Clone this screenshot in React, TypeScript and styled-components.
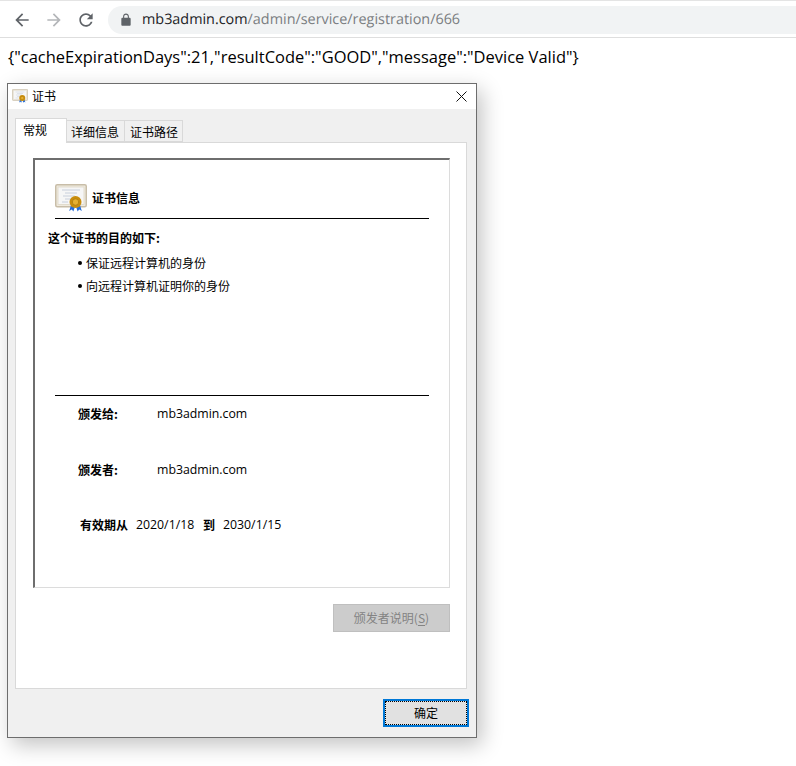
import styled, { createGlobalStyle } from 'styled-components';

const CJK = `"Noto Sans CJK SC", "Noto Sans", sans-serif`;

const Global = createGlobalStyle`
  html, body {
    margin: 0;
    padding: 0;
    background: #fff;
  }
  body {
    height: 766px;
    overflow: hidden;
    position: relative;
    font-family: ${CJK};
  }
`;

const Toolbar = styled.div`
  box-sizing: border-box;
  height: 38px;
  display: flex;
  align-items: center;
  padding: 1px 0 0 12px;
  border-top: 1px solid #e4e4e4;
  border-bottom: 1px solid #dedede;
`;

const NavButton = styled.svg<{ $off?: boolean }>`
  width: 20px;
  height: 20px;
  margin-right: 12px;
  fill: ${(p) => (p.$off ? '#b4b6b9' : '#5f6368')};
`;

const Omnibox = styled.div`
  flex: 1;
  height: 28px;
  display: flex;
  align-items: center;
  padding-left: 11px;
  background: #f1f3f4;
  border-radius: 14px 0 0 14px;
  font: 14.4px "Open Sans", sans-serif;
  text-rendering: geometricPrecision;
  color: #7a7d81;
`;

const LockIcon = styled.svg`
  width: 14px;
  height: 14px;
  margin-right: 9px;
  fill: #5f6368;
`;

const Host = styled.span`
  color: #202124;
`;

const Json = styled.pre`
  margin: 8px 0 0 8px;
  font: 16.48px/22px "Open Sans", sans-serif;
  color: #000;
`;

const Dialog = styled.div`
  position: absolute;
  left: 7px;
  top: 83px;
  box-sizing: border-box;
  width: 470px;
  height: 655px;
  border: 1px solid #6d6d6d;
  background: #f0f0f0;
  box-shadow: 5px 7px 20px rgba(0, 0, 0, 0.24);
  display: flex;
  flex-direction: column;
`;

const TitleBar = styled.div`
  box-sizing: border-box;
  height: 25px;
  flex: none;
  background: #fff;
  display: flex;
  align-items: center;
  padding: 0 9px 2px 4px;
  font-size: 12px;
  color: #000;
`;

const TitleText = styled.span`
  flex: 1;
  margin-left: 4px;
`;

const CloseIcon = styled.svg`
  width: 11px;
  height: 11px;
  margin-top: 2px;
  stroke: #111;
  stroke-width: 1;
  fill: none;
`;

const Tabs = styled.div`
  display: flex;
  align-items: flex-end;
  height: 24px;
  flex: none;
  margin: 9px 0 0 7px;
  position: relative;
  z-index: 1;
`;

const ActiveTab = styled.div`
  box-sizing: border-box;
  width: 52px;
  height: 25px;
  margin-bottom: -1px;
  padding: 2px 0 0 7px;
  background: #fff;
  border: 1px solid #d9d9d9;
  border-bottom: none;
  font-size: 12px;
  line-height: 17px;
  color: #000;
`;

const Tab = styled.div<{ $pad: number }>`
  box-sizing: border-box;
  width: 59px;
  height: 22px;
  margin-left: -1px;
  padding: 2px 0 0 ${(p) => p.$pad}px;
  background: #f0f0f0;
  border: 1px solid #d9d9d9;
  font-size: 12px;
  line-height: 17px;
  color: #000;
`;

const TabPanel = styled.div`
  box-sizing: border-box;
  width: 452px;
  height: 547px;
  flex: none;
  margin-left: 7px;
  background: #fff;
  border: 1px solid #d9d9d9;
  padding: 15px 16px 0 17px;
`;

const InfoBox = styled.div`
  box-sizing: border-box;
  width: 417px;
  height: 430px;
  border-top: 2px solid #6e6e6e;
  border-left: 2px solid #6e6e6e;
  border-right: 1px solid #dcdcdc;
  border-bottom: 1px solid #dcdcdc;
  font-size: 12px;
  color: #000;
  display: flex;
  flex-direction: column;
`;

const HeaderRow = styled.div`
  display: flex;
  align-items: center;
  height: 28px;
  margin: 24px 0 0 20px;
  gap: 5px;
`;

const Strong = styled.span`
  font-weight: 700;
  padding-bottom: 2px;
`;

const Rule = styled.div<{ $top: number }>`
  width: 374px;
  height: 1px;
  flex: none;
  margin: ${(p) => p.$top}px 0 0 20px;
  background: #000;
`;

const Purpose = styled.div`
  margin: 10px 0 0 13px;
  line-height: 18px;
  font-weight: 700;
`;

const PurposeList = styled.ul`
  list-style: none;
  margin: 4px 0 0 43px;
  padding: 0;
  height: 139px;
`;

const PurposeItem = styled.li`
  height: 23px;
  line-height: 23px;
  display: flex;
  align-items: center;
  gap: 4px;
  &::before {
    content: '';
    width: 4px;
    height: 4px;
    border-radius: 50%;
    background: #000;
  }
`;

const IssueRow = styled.div<{ $gap: number }>`
  display: flex;
  line-height: 18px;
  margin: ${(p) => p.$gap}px 0 0 43px;
`;

const IssueLabel = styled.span`
  width: 79px;
  font-weight: 700;
`;

const Domain = styled.span`
  font-family: "Open Sans", sans-serif;
  font-size: 12.3px;
`;

const ValidityRow = styled.div`
  display: flex;
  line-height: 18px;
  margin: 37px 0 0 45px;
`;

const DateText = styled.span<{ $width: number }>`
  width: ${(p) => p.$width}px;
  font-family: "Open Sans", sans-serif;
  font-size: 12.3px;
`;

const ValidityLabel = styled.span<{ $width: number }>`
  width: ${(p) => p.$width}px;
  font-weight: 700;
`;

const PanelActions = styled.div`
  display: flex;
  justify-content: flex-end;
  margin-top: 16px;
`;

const IssuerButton = styled.div`
  box-sizing: border-box;
  width: 117px;
  height: 28px;
  background: #cccccc;
  border: 1px solid #bfbfbf;
  color: #838383;
  font-size: 12px;
  line-height: 26px;
  text-align: center;
  u {
    text-underline-offset: 2px;
  }
`;

const DialogFooter = styled.div`
  display: flex;
  justify-content: flex-end;
  padding: 10px 7px 0 0;
`;

const OkButton = styled.div`
  box-sizing: border-box;
  width: 86px;
  height: 28px;
  background: #e1e1e1;
  border: 2px solid #0078d7;
  outline: 1px dotted #000;
  outline-offset: -3px;
  font-size: 12px;
  line-height: 24px;
  text-align: center;
  color: #000;
`;

function CertIcon({ size }: { size: number }) {
  return (
    <svg width={size} height={size * 0.875} viewBox="0 0 32 28">
      <rect x="0.75" y="0.75" width="30.5" height="22" rx="1.5" fill="#efeade" stroke="#c8bda8" strokeWidth="1.5" />
      <rect x="3" y="3" width="26" height="17.5" fill="#f6f6f6" stroke="#ddd5c4" strokeWidth="0.75" />
      <path d="M7 6h18M10 9h12M8 12h12M10 15h6M7 18h6" stroke="#c3cbd8" strokeWidth="0.9" />
      <path d="M16 21l-1.8 6 2.6-1.4 1.6 2 1.3-4zM25 21l1.8 6-2.6-1.4-1.6 2-1.3-4z" fill="#2a6fd6" />
      <circle cx="20.5" cy="18" r="6" fill="#c98d0c" />
      <circle cx="20.5" cy="18" r="3.2" fill="#e6b030" stroke="#a87508" strokeWidth="0.7" />
    </svg>
  );
}

export default function App() {
  return (
    <>
      <Global />
      <Toolbar>
        <NavButton viewBox="0 0 24 24">
          <path d="M20 11H7.83l5.59-5.59L12 4l-8 8 8 8 1.41-1.41L7.83 13H20v-2z" />
        </NavButton>
        <NavButton $off viewBox="0 0 24 24">
          <path d="M12 4l-1.41 1.41L16.17 11H4v2h12.17l-5.58 5.59L12 20l8-8z" />
        </NavButton>
        <NavButton viewBox="0 0 24 24">
          <path d="M17.65 6.35C16.2 4.9 14.21 4 12 4c-4.42 0-7.99 3.58-7.99 8s3.57 8 7.99 8c3.73 0 6.84-2.55 7.73-6h-2.08c-.82 2.33-3.04 4-5.65 4-3.31 0-6-2.69-6-6s2.69-6 6-6c1.66 0 3.14.69 4.22 1.78L13 11h7V4l-2.35 2.35z" />
        </NavButton>
        <Omnibox>
          <LockIcon viewBox="0 0 24 24">
            <path d="M18 8h-1V6c0-2.76-2.24-5-5-5S7 3.24 7 6v2H6c-1.1 0-2 .9-2 2v10c0 1.1.9 2 2 2h12c1.1 0 2-.9 2-2V10c0-1.1-.9-2-2-2zM8.9 8V6c0-1.71 1.39-3.1 3.1-3.1s3.1 1.39 3.1 3.1v2H8.9z" />
          </LockIcon>
          <Host>mb3admin.com</Host>/admin/service/registration/666
        </Omnibox>
      </Toolbar>
      <Json>{'{"cacheExpirationDays":21,"resultCode":"GOOD","message":"Device Valid"}'}</Json>

      <Dialog>
        <TitleBar>
          <CertIcon size={16} />
          <TitleText>证书</TitleText>
          <CloseIcon viewBox="0 0 11 11">
            <path d="M0.5 0.5l10 10M10.5 0.5l-10 10" />
          </CloseIcon>
        </TitleBar>
        <Tabs>
          <ActiveTab>常规</ActiveTab>
          <Tab $pad={4}>详细信息</Tab>
          <Tab $pad={5}>证书路径</Tab>
        </Tabs>
        <TabPanel>
          <InfoBox>
            <HeaderRow>
              <CertIcon size={32} />
              <Strong>证书信息</Strong>
            </HeaderRow>
            <Rule $top={6} />
            <Purpose>这个证书的目的如下:</Purpose>
            <PurposeList>
              <PurposeItem>保证远程计算机的身份</PurposeItem>
              <PurposeItem>向远程计算机证明你的身份</PurposeItem>
            </PurposeList>
            <Rule $top={5} />
            <IssueRow $gap={9}>
              <IssueLabel>颁发给:</IssueLabel>
              <Domain>mb3admin.com</Domain>
            </IssueRow>
            <IssueRow $gap={38}>
              <IssueLabel>颁发者:</IssueLabel>
              <Domain>mb3admin.com</Domain>
            </IssueRow>
            <ValidityRow>
              <ValidityLabel $width={56}>有效期从</ValidityLabel>
              <DateText $width={67}>2020/1/18</DateText>
              <ValidityLabel $width={20}>到</ValidityLabel>
              <DateText $width={70}>2030/1/15</DateText>
            </ValidityRow>
          </InfoBox>
          <PanelActions>
            <IssuerButton>
              颁发者说明(<u>S</u>)
            </IssuerButton>
          </PanelActions>
        </TabPanel>
        <DialogFooter>
          <OkButton>确定</OkButton>
        </DialogFooter>
      </Dialog>
    </>
  );
}
